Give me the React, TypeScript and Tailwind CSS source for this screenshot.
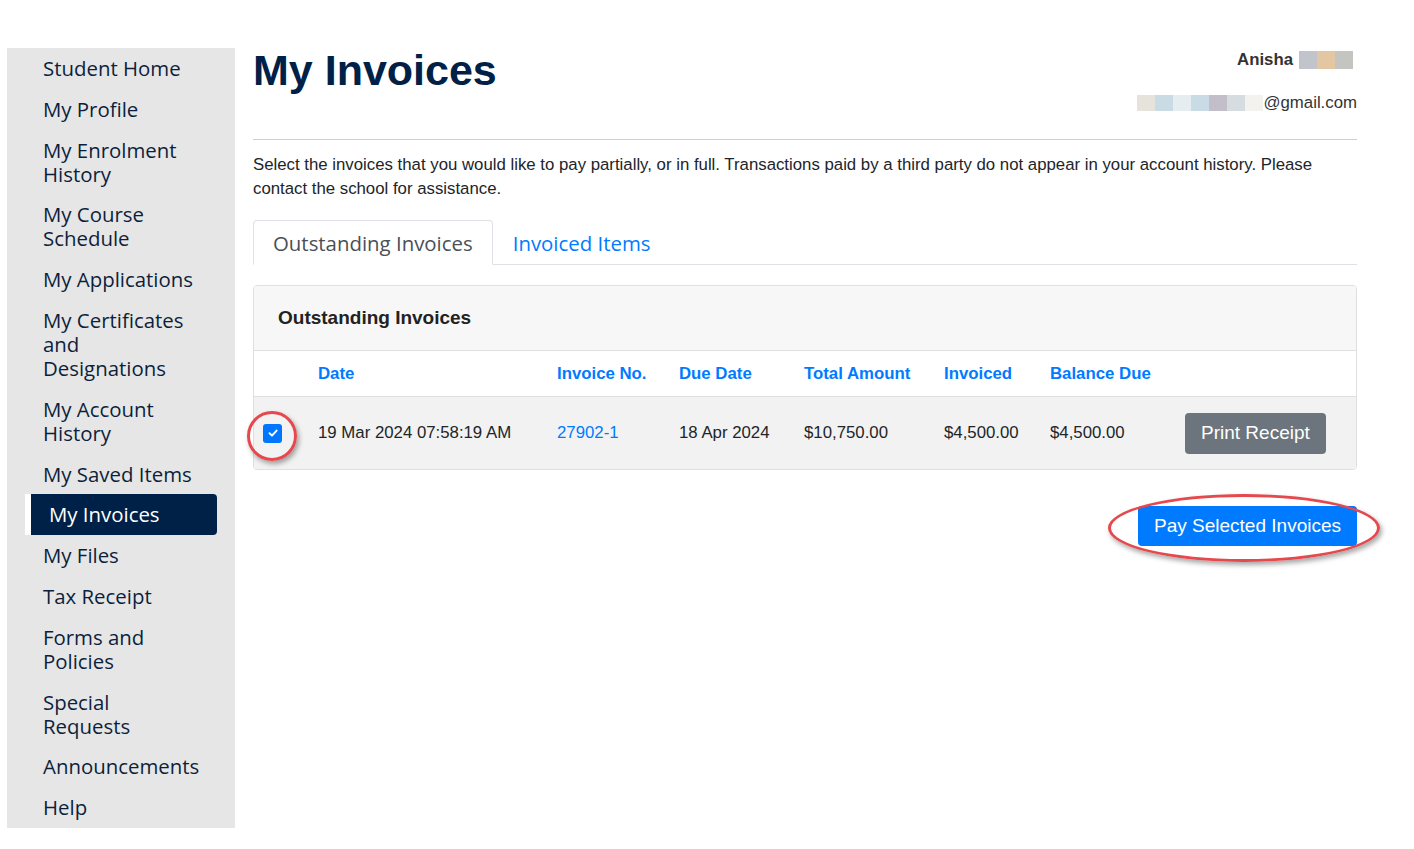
import React from 'react';

const navItems: { label: string; active?: boolean }[] = [
  { label: 'Student Home' },
  { label: 'My Profile' },
  { label: 'My Enrolment History' },
  { label: 'My Course Schedule' },
  { label: 'My Applications' },
  { label: 'My Certificates and Designations' },
  { label: 'My Account History' },
  { label: 'My Saved Items' },
  { label: 'My Invoices', active: true },
  { label: 'My Files' },
  { label: 'Tax Receipt' },
  { label: 'Forms and Policies' },
  { label: 'Special Requests' },
  { label: 'Announcements' },
  { label: 'Help' },
];

const columns = [
  { label: '', w: 'w-[52px]' },
  { label: 'Date', w: 'w-[239px]' },
  { label: 'Invoice No.', w: 'w-[122px]' },
  { label: 'Due Date', w: 'w-[125px]' },
  { label: 'Total Amount', w: 'w-[140px]' },
  { label: 'Invoiced', w: 'w-[106px]' },
  { label: 'Balance Due', w: 'w-[135px]' },
  { label: '', w: 'flex-1' },
];

function Sidebar() {
  return (
    <nav className="w-[228px] shrink-0 bg-[#e6e6e6] font-['Open_Sans',sans-serif] text-[20.4px] leading-[24px] text-[#0d1f3c]">
      {navItems.map((item) =>
        item.active ? (
          <div
            key={item.label}
            className="ml-[18px] w-[192px] rounded-r border-l-[6px] border-white bg-[#002147] pb-[8.8px] pl-[18px] pt-[8px] text-white"
          >
            {item.label}
          </div>
        ) : (
          <div key={item.label} className="pb-[8.8px] pl-[36px] pr-[35px] pt-[8px]">
            {item.label}
          </div>
        )
      )}
    </nav>
  );
}

function Blur({ colors, h, w }: { colors: string[]; h: string; w: string }) {
  return (
    <div className={`flex ${h}`}>
      {colors.map((c, i) => (
        <div key={i} className={`h-full ${w}`} style={{ backgroundColor: c }} />
      ))}
    </div>
  );
}

export default function App() {
  return (
    <div className="min-h-[849px] bg-white pl-[7px] pt-[48px] font-['Liberation_Sans',Arial,sans-serif] text-[#212529]">
      <div className="flex items-start gap-[18px]">
        <Sidebar />

        <main className="w-[1104px]">
          {/* Header */}
          <div className="flex h-[92px] items-start justify-between border-b border-[#cfcfcf]">
            <h1 className="mt-[1px] text-[43px] font-bold leading-[43px] text-[#002147]">My Invoices</h1>
            <div className="flex flex-col items-end text-[16.8px] text-[#333]">
              <div className="mt-[3px] flex h-[18px] items-center gap-[6px] pr-[4px]">
                <span className="font-bold leading-[18px]">Anisha</span>
                <Blur h="h-[18px]" w="w-[18px]" colors={['#c2c4cc', '#e3c7a3', '#c4c5c0']} />
              </div>
              <div className="mt-[26px] flex h-[16px] items-center">
                <Blur h="h-[16px]" w="w-[18px]" colors={['#e6e2dc', '#c9dbe4', '#e6edf1', '#c9dce6', '#c2bfca', '#d6dde0', '#f4f2ef']} />
                <span className="leading-[16px]">@gmail.com</span>
              </div>
            </div>
          </div>

          <p className="mt-[13px] text-[16.8px] leading-[24px]">
            Select the invoices that you would like to pay partially, or in full. Transactions paid by a third party do not appear in your account history. Please contact the school for assistance.
          </p>

          {/* Tabs */}
          <div className="mt-[19px] flex border-b border-[#dee2e6] font-['Open_Sans',sans-serif] text-[20.4px] leading-[24px]">
            <div className="-mb-px rounded-t border border-b-white border-[#dee2e6] bg-white px-[19px] pb-[9px] pt-[10px] text-[#495057]">
              Outstanding Invoices
            </div>
            <div className="px-[20px] pb-[9px] pt-[11px] text-[#007bff]">Invoiced Items</div>
          </div>

          {/* Card */}
          <div className="mt-[20px] overflow-hidden rounded border border-[#dfdfdf]">
            <div className="flex h-[65px] items-center border-b border-[#dfdfdf] bg-[#f7f7f7] px-6 text-[19px] font-bold text-[#222]">
              Outstanding Invoices
            </div>
            <div className="flex h-[46px] items-center border-b border-[#dfdfdf] bg-white text-[16.8px] font-bold text-[#007bff]">
              {columns.map((c, i) => (
                <div key={i} className={`${c.w} shrink-0 pl-3`}>
                  {c.label}
                </div>
              ))}
            </div>
            <div className="relative flex h-[72px] items-center bg-[#f2f2f2] text-[16.8px]">
              <div className="w-[52px] shrink-0 pl-[9px]">
                <div className="flex h-[19px] w-[19px] items-center justify-center rounded-[3px] bg-[#0075ff]">
                  <svg width="12" height="12" viewBox="0 0 12 12" fill="none">
                    <path d="M2.5 6.2 L5 8.6 L9.6 3.6" stroke="white" strokeWidth="2" strokeLinecap="round" strokeLinejoin="round" />
                  </svg>
                </div>
              </div>
              <div className="w-[239px] shrink-0 pl-3">19 Mar 2024 07:58:19 AM</div>
              <div className="w-[122px] shrink-0 pl-3 text-[#007bff]">27902-1</div>
              <div className="w-[125px] shrink-0 pl-3">18 Apr 2024</div>
              <div className="w-[140px] shrink-0 pl-3">$10,750.00</div>
              <div className="w-[106px] shrink-0 pl-3">$4,500.00</div>
              <div className="w-[135px] shrink-0 pl-3">$4,500.00</div>
              <div className="flex-1 pl-3">
                <button className="h-[41px] rounded bg-[#6c757d] px-4 text-[19px] text-white">Print Receipt</button>
              </div>
            </div>
          </div>

          <div className="relative mt-[36px] flex justify-end">
            <button className="h-[40px] rounded bg-[#007bff] px-4 text-[19px] text-white">Pay Selected Invoices</button>
            {/* annotation ellipse */}
            <div className="pointer-events-none absolute right-[-23px] top-[-12px] h-[68px] w-[272px] rounded-[50%] border-[3px] border-[#e5484d] shadow-[2px_3px_5px_rgba(0,0,0,0.35)]" />
          </div>
        </main>
      </div>

      {/* annotation circle around checkbox */}
      <div className="pointer-events-none absolute left-[247px] top-[411px] h-[50px] w-[50px] rounded-full border-[3px] border-[#e5484d] shadow-[2px_3px_5px_rgba(0,0,0,0.35)]" />
    </div>
  );
}
